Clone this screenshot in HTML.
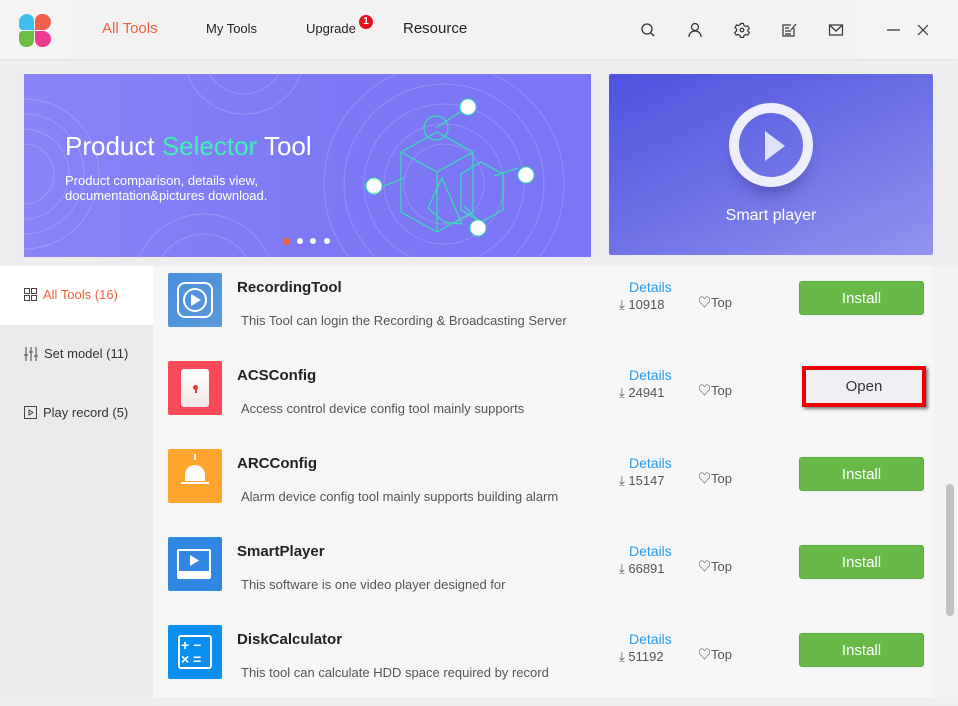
<!DOCTYPE html>
<html><head><meta charset="utf-8"><style>
*{margin:0;padding:0;box-sizing:border-box}
body{width:958px;height:697px;overflow:hidden;background:#eeeef0;font-family:"Liberation Sans","Noto Sans CJK SC",sans-serif;position:relative}
.abs{position:absolute}
.top{left:0;top:0;width:958px;height:59px;background:#f2f2f2;box-shadow:0 1px 3px rgba(0,0,0,.06)}
.logo{left:0;top:0;width:70px;height:59px;background:#f4f4f4}
.nav{top:21px;font-size:14px;color:#222}
.ic{top:22px}
.side{left:0;top:266px;width:153px;height:431px;background:#ebebee}
.sitem{position:absolute;left:24px;font-size:13px;color:#333;display:flex;align-items:center;gap:6px}
.content{left:153px;top:266px;width:780px;height:431px;background:#f6f6f6}
.row{position:absolute;left:0;width:780px;height:88px}
.icon{position:absolute;left:15px;top:7px;width:54px;height:54px;border-radius:2px}
.title{position:absolute;left:84px;top:13px;font-size:15px;font-weight:bold;color:#222}
.desc{position:absolute;left:88px;top:47px;font-size:13px;color:#555}
.det{position:absolute;left:476px;top:13px;font-size:14px;color:#2a9af0}
.cnt{position:absolute;left:466px;top:31px;font-size:13px;color:#555}
.tp{position:absolute;left:545px;top:26px;font-size:13px;color:#555}
.btn{position:absolute;left:646px;top:15px;width:125px;height:34px;background:#68b947;border:1px solid #5aa83c;border-radius:3px;color:#fff;font-size:15px;display:flex;align-items:center;justify-content:center}
</style></head><body>
<div class="abs top"></div>
<div class="abs logo">
<svg width="70" height="59" viewBox="0 0 70 59">
<path d="M34 30H23a4 4 0 0 1-4-4v-4a8 8 0 0 1 8-8h0a7 7 0 0 1 7 7z" fill="#3bbfef"/>
<path d="M35 30V21a7 7 0 0 1 7-7h1a8 8 0 0 1 8 8v0a8 8 0 0 1-8 8z" fill="#f2604a"/>
<path d="M34 31v9a7 7 0 0 1-7 7h-1a7 7 0 0 1-7-7v-5a4 4 0 0 1 4-4z" fill="#6cbe45"/>
<path d="M35 31h8a8 8 0 0 1 8 8v0a8 8 0 0 1-8 8h-1a7 7 0 0 1-7-7z" fill="#ee3a97"/>
</svg></div>
<div class="abs nav" style="left:102px;top:20px;font-size:15px;color:#f0603e">All Tools</div>
<div class="abs nav" style="left:206px;font-size:13px">My Tools</div>
<div class="abs nav" style="left:306px;font-size:13px">Upgrade</div>
<div class="abs" style="left:359px;top:15px;width:14px;height:14px;border-radius:7px;background:#e8101e;color:#fff;font-size:10px;font-weight:bold;text-align:center;line-height:14px">1</div>
<div class="abs nav" style="left:403px;top:20px;font-size:15px">Resource</div>
<svg class="abs ic" style="left:640px" width="16" height="16" viewBox="0 0 16 16" fill="none" stroke="#333" stroke-width="1.3"><circle cx="7" cy="7" r="5"/><path d="M11 11l3 3"/></svg>
<svg class="abs ic" style="left:687px" width="16" height="16" viewBox="0 0 16 16" fill="none" stroke="#333" stroke-width="1.3"><circle cx="8" cy="5" r="3.5"/><path d="M2 15c0-4 3-6 6-6s6 2 6 6"/></svg>
<svg class="abs ic" style="left:734px" width="16" height="16" viewBox="0 0 16 16" fill="none" stroke="#333" stroke-width="1.2"><path d="M6.5 1.5h3l.5 2 1.8 1 2-.6 1.5 2.6-1.5 1.5v1l1.5 1.5-1.5 2.6-2-.6-1.8 1-.5 2h-3l-.5-2-1.8-1-2 .6-1.5-2.6L2.5 9V7L1 5.5l1.5-2.6 2 .6 1.8-1z"/><circle cx="8" cy="8" r="1.8"/></svg>
<svg class="abs ic" style="left:781px" width="16" height="16" viewBox="0 0 16 16" fill="none" stroke="#333" stroke-width="1.2"><path d="M13 6v8H2V3h8M4 6h4M4 9h6M4 12h6M10 8l5-6"/></svg>
<svg class="abs ic" style="left:828px" width="16" height="16" viewBox="0 0 16 16" fill="none" stroke="#333" stroke-width="1.2"><rect x="1.5" y="3" width="13" height="10"/><path d="M1.5 3l6.5 6 6.5-6"/></svg>
<div class="abs" style="left:858px;top:0;width:100px;height:59px;background:#f4f4f4"></div>
<svg class="abs" style="left:885px;top:22px" width="50" height="16" viewBox="0 0 50 16" fill="none" stroke="#333" stroke-width="1.2"><path d="M2 8h13M33 3l10 10M43 3L33 13"/></svg>

<div class="abs" style="left:24px;top:74px;width:567px;height:183px;background:linear-gradient(90deg,#8a84f8,#7c78f6 60%,#7b76f5);overflow:hidden">
<svg width="567" height="183" style="position:absolute;left:0;top:0" fill="none" stroke="rgba(255,255,255,.18)">
<circle cx="0" cy="100" r="30"/><circle cx="0" cy="100" r="45"/><circle cx="0" cy="100" r="60"/><circle cx="0" cy="100" r="75"/>
<circle cx="420" cy="110" r="40"/><circle cx="420" cy="110" r="60"/><circle cx="420" cy="110" r="80"/><circle cx="420" cy="110" r="100"/><circle cx="420" cy="110" r="120"/>
<circle cx="220" cy="-20" r="40"/><circle cx="220" cy="-20" r="60"/><circle cx="180" cy="210" r="50"/><circle cx="180" cy="210" r="70"/>
<g stroke="#35e2b0" stroke-width="1.2"><path d="M377 78l36-20 36 20v60l-36 20-36-20z M377 78l36 20 36-20 M413 98v60"/><path d="M437 100l20-12 22 12v36l-22 12-20-12z"/><path d="M420 148l-16-14 14-30 20 46z"/><circle cx="412" cy="54" r="12"/>
<path d="M412 54l30-20M360 112l20-8M470 102l24-8M440 132l20 20"/></g>
<g fill="#fff" stroke="#35e2b0"><circle cx="444" cy="33" r="8"/><circle cx="502" cy="101" r="8"/><circle cx="350" cy="112" r="8"/><circle cx="454" cy="154" r="8"/></g>
</svg>
<div style="position:absolute;left:41px;top:57px;font-size:26px;color:#fff">Product <span style="color:#3ef0b4">Selector</span> Tool</div>
<div style="position:absolute;left:41px;top:99px;font-size:13px;color:#fff;line-height:15px">Product comparison, details view,<br>documentation&amp;pictures download.</div>
<div style="position:absolute;left:259px;top:164px;width:7px;height:7px;border-radius:4px;background:#f0603e"></div>
<div style="position:absolute;left:273px;top:164px;width:6px;height:6px;border-radius:3px;background:#fff"></div>
<div style="position:absolute;left:286px;top:164px;width:6px;height:6px;border-radius:3px;background:#fff"></div>
<div style="position:absolute;left:300px;top:164px;width:6px;height:6px;border-radius:3px;background:#fff"></div>
</div>

<div class="abs" style="left:609px;top:74px;width:324px;height:181px;border-radius:2px;background:linear-gradient(155deg,#4e52de,#6d71e6 50%,#9294ef)">
<div style="position:absolute;left:120px;top:29px;width:84px;height:84px;border-radius:42px;border:10px solid #eeeefc;box-shadow:0 14px 14px -6px rgba(60,60,150,.5)"></div>
<svg style="position:absolute;left:155px;top:56px" width="22" height="32"><path d="M1 1v30l20-15z" fill="#e0e2fa"/></svg>
<div style="position:absolute;left:0;width:324px;top:133px;text-align:center;font-size:16px;color:#fff">Smart player</div>
</div>

<div class="abs side">
<div style="position:absolute;left:0;top:0;width:153px;height:59px;background:#fff"></div>
<div class="sitem" style="top:21px;color:#f0603e"><svg width="13" height="13" fill="none" stroke="#444"><rect x=".5" y=".5" width="5" height="5"/><rect x="7.5" y=".5" width="5" height="5"/><rect x=".5" y="7.5" width="5" height="5"/><rect x="7.5" y="7.5" width="5" height="5"/></svg>All Tools (16)</div>
<div class="sitem" style="top:80px"><svg width="14" height="14" fill="none" stroke="#444"><path d="M2 0v14M7 0v14M12 0v14M0 8h4M5 5h4M10 9h4"/></svg>Set model (11)</div>
<div class="sitem" style="top:139px"><svg width="13" height="13" fill="none" stroke="#444"><rect x=".5" y=".5" width="12" height="12"/><path d="M5 4v5l4-2.5z"/></svg>Play record (5)</div>
</div>

<div class="abs content">
<div class="row" style="top:0">
<div class="icon" style="background:linear-gradient(135deg,#4a8ee0,#5a9ad8)"><div style="position:absolute;left:9px;top:9px;width:36px;height:36px;border:2px solid #fff;border-radius:8px"></div><div style="position:absolute;left:15px;top:15px;width:24px;height:24px;border:2px solid #fff;border-radius:12px"></div><svg style="position:absolute;left:23px;top:21px" width="10" height="12"><path d="M0 0v12l10-6z" fill="#fff"/></svg></div>
<div class="title">RecordingTool</div><div class="desc">This Tool can login the Recording &amp; Broadcasting Server</div>
<div class="det">Details</div><div class="cnt">⤓ 10918</div><div class="tp">♡Top</div><div class="btn">Install</div></div>
<div class="row" style="top:88px">
<div class="icon" style="background:#fa4a5a"><div style="position:absolute;left:13px;top:8px;width:28px;height:38px;background:linear-gradient(#fff,#f2e6e8);border-radius:3px"></div><div style="position:absolute;left:25px;top:24px;width:5px;height:5px;border-radius:3px;background:#e33"></div><div style="position:absolute;left:27px;top:27px;width:1.5px;height:5px;background:#e33"></div></div>
<div class="title">ACSConfig</div><div class="desc">Access control device config tool mainly supports</div>
<div class="det">Details</div><div class="cnt">⤓ 24941</div><div class="tp">♡Top</div>
<div class="btn" style="left:649px;top:12px;width:124px;height:41px;background:#eeeff2;border:4px solid #e00;border-radius:0;color:#333;box-shadow:2px 2px 3px rgba(0,0,0,.5)">Open</div></div>
<div class="row" style="top:176px">
<div class="icon" style="background:#ffa42c"><div style="position:absolute;left:17px;top:16px;width:20px;height:16px;border-radius:10px 10px 0 0;background:#fff"></div><div style="position:absolute;left:13px;top:33px;width:28px;height:2px;background:#fff"></div><div style="position:absolute;left:26px;top:5px;width:2px;height:6px;background:#fff"></div></div>
<div class="title">ARCConfig</div><div class="desc">Alarm device config tool mainly supports building alarm</div>
<div class="det">Details</div><div class="cnt">⤓ 15147</div><div class="tp">♡Top</div><div class="btn">Install</div></div>
<div class="row" style="top:264px">
<div class="icon" style="background:#2f86e3"><div style="position:absolute;left:9px;top:12px;width:34px;height:30px;background:#fff;border-radius:2px"></div><div style="position:absolute;left:11px;top:14px;width:30px;height:20px;background:#2f86e3"></div><svg style="position:absolute;left:22px;top:18px" width="9" height="11"><path d="M0 0v11l9-5.5z" fill="#fff"/></svg></div>
<div class="title">SmartPlayer</div><div class="desc">This software is one video player designed for</div>
<div class="det">Details</div><div class="cnt">⤓ 66891</div><div class="tp">♡Top</div><div class="btn">Install</div></div>
<div class="row" style="top:352px">
<div class="icon" style="background:#0a8ff0"><div style="position:absolute;left:10px;top:10px;width:34px;height:34px;border:2px solid #fff;border-radius:3px"></div><div style="position:absolute;left:13px;top:13px;color:#fff;font-weight:bold;font-size:14px;line-height:14px">+ −<br>× =</div></div>
<div class="title">DiskCalculator</div><div class="desc">This tool can calculate HDD space required by record</div>
<div class="det">Details</div><div class="cnt">⤓ 51192</div><div class="tp">♡Top</div><div class="btn">Install</div></div>
</div>
<div class="abs" style="left:933px;top:266px;width:25px;height:431px;background:#f2f2f2"></div>
<div class="abs" style="left:946px;top:484px;width:8px;height:132px;border-radius:4px;background:#c1c1c1"></div>
</body></html>
